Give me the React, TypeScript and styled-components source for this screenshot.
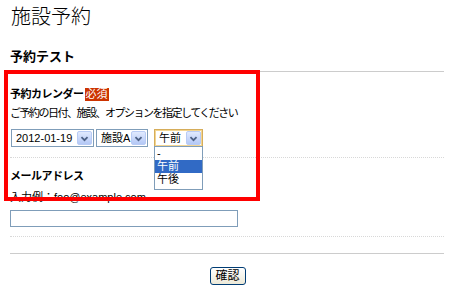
import styled, { createGlobalStyle } from 'styled-components';

const GlobalStyle = createGlobalStyle`
  html, body {
    margin: 0;
    padding: 0;
    background: #fff;
  }
  body {
    font-family: "Liberation Sans", "Noto Sans CJK JP", sans-serif;
    color: #000;
  }
`;

const timeOptions = ['-', '午前', '午後'];

function Chevron() {
  return (
    <svg width='15' height='15' viewBox='0 0 15 15'>
      <path
        d='M4 6 L7.5 9.5 L11 6'
        fill='none'
        stroke='#4d6185'
        strokeWidth='2'
      />
    </svg>
  );
}

function FakeSelect({
  value,
  width,
  focused,
  open,
}: {
  value: string;
  width: number;
  focused?: boolean;
  open?: boolean;
}) {
  return (
    <SelectBox $width={width} $focused={focused}>
      <SelectValue>{value}</SelectValue>
      <ArrowButton>
        <Chevron />
      </ArrowButton>
      {open && (
        <OptionList>
          {timeOptions.map((option) => (
            <OptionItem
              key={option}
              $active={option === value}
            >
              {option}
            </OptionItem>
          ))}
        </OptionList>
      )}
    </SelectBox>
  );
}

export default function App() {
  return (
    <Page>
      <GlobalStyle />
      <PageTitle>施設予約</PageTitle>
      <FormTitle>予約テスト</FormTitle>
      <Field>
        <Label>
          予約カレンダー<Required>必須</Required>
        </Label>
        <Description>ご予約の日付、施設、オプションを指定してください</Description>
        <SelectRow>
          <FakeSelect
            value='2012-01-19'
            width={83}
          />
          <FakeSelect
            value='施設A'
            width={52}
          />
          <FakeSelect
            value='午前'
            width={49}
            focused
            open
          />
        </SelectRow>
      </Field>
      <Field>
        <Label>メールアドレス</Label>
        <Example>入力例：foo@example.com</Example>
        <TextInput type='text' />
      </Field>
      <Actions>
        <ConfirmButton>確認</ConfirmButton>
      </Actions>
      <Highlight />
    </Page>
  );
}

const Page = styled.div`
  position: relative;
  width: 454px;
  height: 300px;
  padding: 0 10px;
  box-sizing: border-box;
  overflow: hidden;
`;

const PageTitle = styled.h1`
  margin: 5px 0 0 1px;
  font-size: 20px;
  line-height: 24px;
  font-weight: 300;
`;

const FormTitle = styled.h2`
  margin: 20px 0 0;
  padding-bottom: 6px;
  font-size: 13px;
  line-height: 16px;
  font-weight: bold;
  border-bottom: 1px solid #cccccc;
`;

const Field = styled.div`
  padding: 14px 0 10px;
  border-bottom: 1px dotted #d8d8d8;

  & + & {
    padding-top: 10px;
    padding-bottom: 9px;
  }
`;

const Label = styled.div`
  display: flex;
  align-items: center;
  font-size: 11px;
  line-height: 16px;
  font-weight: bold;
  letter-spacing: -0.5px;
`;

const Required = styled.span`
  margin-left: 1px;
  padding: 0 1px;
  background: #cc3300;
  color: #fff;
  font-weight: normal;
  font-size: 11px;
  line-height: 13px;
  letter-spacing: 0;
`;

const Description = styled.div`
  margin-top: 3px;
  font-size: 11px;
  line-height: 16px;
  letter-spacing: -1.5px;
`;

const Example = styled.div`
  margin-top: 5px;
  font-size: 11px;
  line-height: 16px;
`;

const SelectRow = styled.div`
  display: flex;
  align-items: center;
  margin-top: 8px;
  padding-left: 1px;

  & > :nth-child(2) {
    margin: 0 6px 0 2px;
  }
`;

const SelectBox = styled.div<{ $width: number; $focused?: boolean }>`
  position: relative;
  display: flex;
  align-items: center;
  justify-content: space-between;
  width: ${(p) => p.$width}px;
  height: 18px;
  box-sizing: border-box;
  padding: 1px;
  background: #fff;
  border: 1px solid ${(p) => (p.$focused ? '#d6ad5a' : '#7f9db9')};
  box-shadow: ${(p) => (p.$focused ? 'inset 0 0 0 1px #f3d591' : 'none')};
`;

const SelectValue = styled.span`
  padding-left: 3px;
  font-size: 11px;
  line-height: 14px;
  white-space: nowrap;
`;

const ArrowButton = styled.span`
  display: flex;
  width: 15px;
  height: 14px;
  box-sizing: border-box;
  border: 1px solid #b8cbf5;
  border-radius: 2px;
  background: linear-gradient(#e1eafe, #b4c8f6);
  align-items: center;
  justify-content: center;
`;

const OptionList = styled.ul`
  position: absolute;
  top: 100%;
  left: -1px;
  z-index: 2;
  width: 49px;
  box-sizing: border-box;
  margin: 0;
  padding: 0 0 3px;
  list-style: none;
  background: #fff;
  border: 1px solid #7f9db9;
`;

const OptionItem = styled.li<{ $active?: boolean }>`
  height: 13px;
  padding-left: 2px;
  font-size: 11px;
  line-height: 13px;
  background: ${(p) => (p.$active ? '#316ac5' : 'transparent')};
  color: ${(p) => (p.$active ? '#fff' : '#000')};
`;

const TextInput = styled.input`
  display: block;
  margin-top: 5px;
  width: 228px;
  height: 17px;
  box-sizing: border-box;
  border: 1px solid #7f9db9;
  padding: 0 2px;
`;

const Actions = styled.div`
  margin-top: 16px;
  padding-top: 13px;
  border-top: 1px solid #cccccc;
  display: flex;
  justify-content: center;
`;

const ConfirmButton = styled.button`
  height: 18px;
  width: 36px;
  padding: 0;
  margin-left: 1px;
  border: 1px solid #003c74;
  border-radius: 3px;
  background: linear-gradient(#ffffff, #ece9d8);
  font-family: "Liberation Sans", "Noto Sans CJK JP", sans-serif;
  font-size: 12px;
  line-height: 14px;
  color: #000;
`;

const Highlight = styled.div`
  position: absolute;
  left: 4px;
  top: 70px;
  width: 256px;
  height: 131px;
  box-sizing: border-box;
  border: 4px solid #ff0000;
  pointer-events: none;
  z-index: 3;
`;
